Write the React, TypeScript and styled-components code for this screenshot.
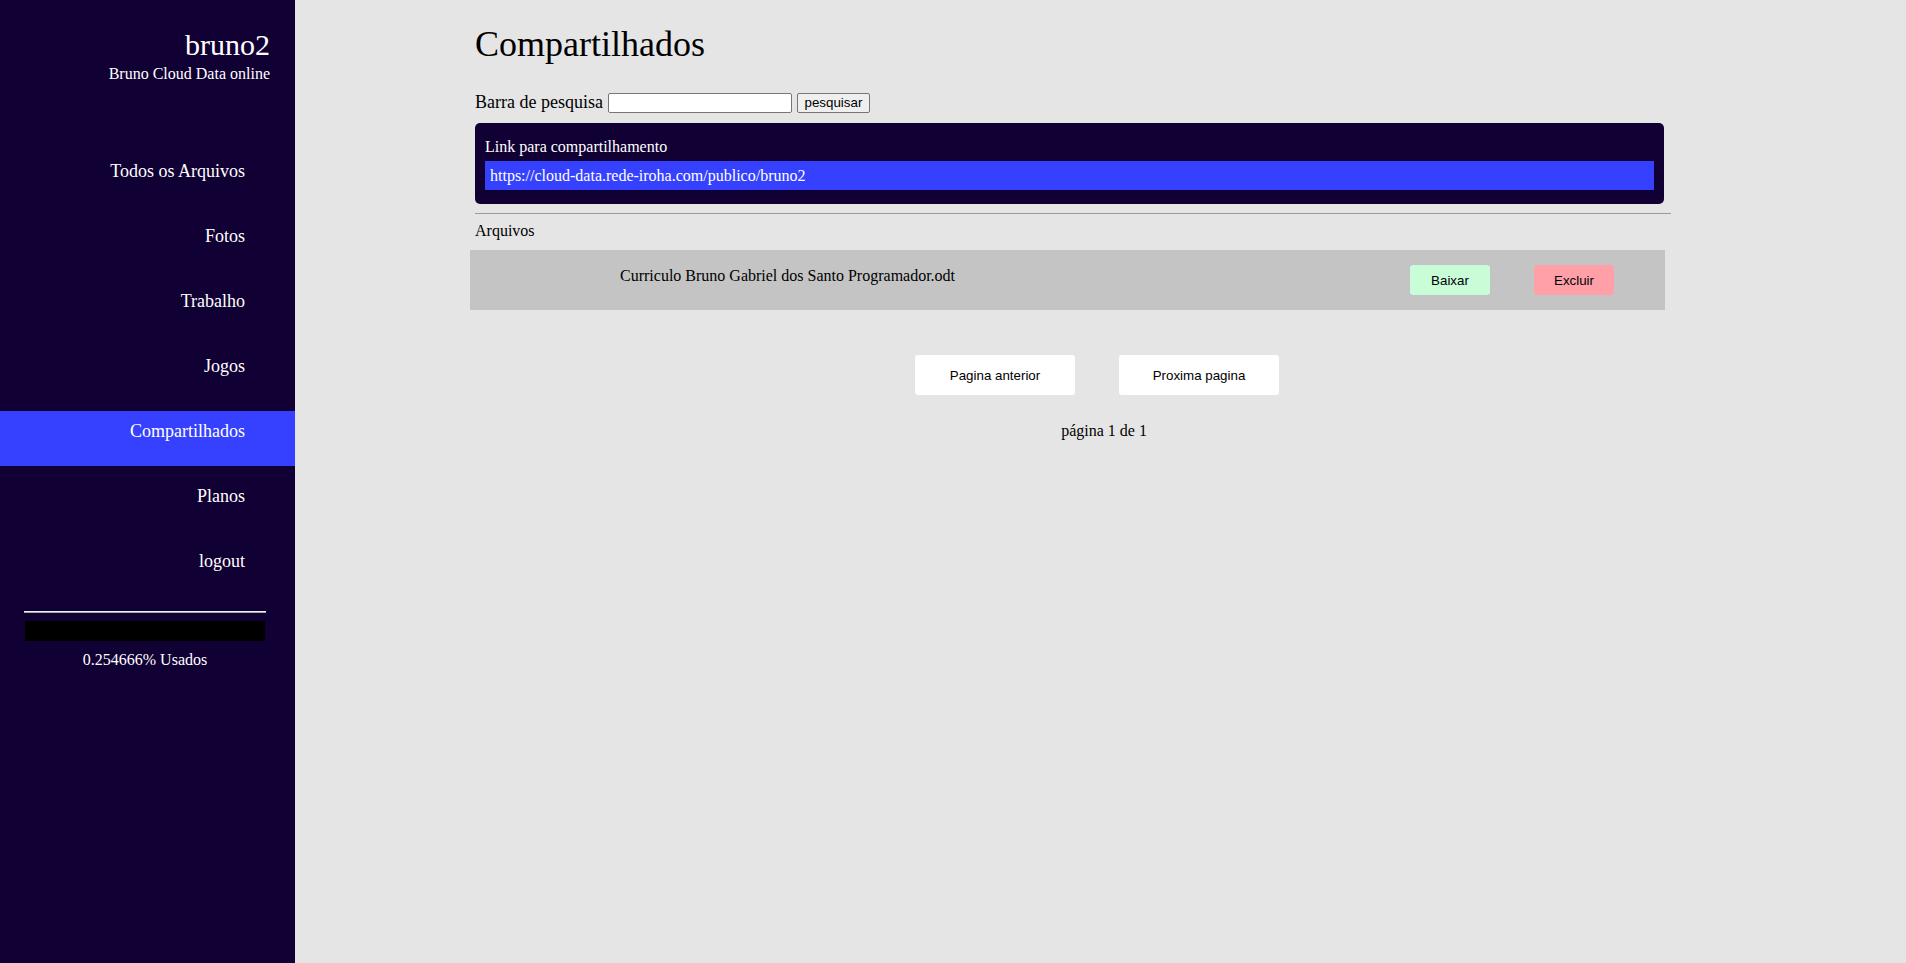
import React from "react";
import styled, { createGlobalStyle } from "styled-components";

const GlobalStyle = createGlobalStyle`
  html, body {
    margin: 0;
    padding: 0;
    background: #e5e5e5;
    font-family: "Liberation Serif", "Times New Roman", serif;
    color: #000;
  }
  * { box-sizing: border-box; }
`;

const Layout = styled.div`
  display: flex;
  min-height: 100vh;
`;

const Sidebar = styled.aside`
  width: 295px;
  flex-shrink: 0;
  background: #110033;
  color: #fff;
  display: flex;
  flex-direction: column;
`;

const Brand = styled.div`
  text-align: right;
  padding: 28px 25px 0 0;
`;

const BrandTitle = styled.div`
  font-size: 30px;
  line-height: 34px;
`;

const BrandSub = styled.div`
  font-size: 16px;
  line-height: 18px;
  margin-top: 3px;
`;

const Nav = styled.nav`
  display: flex;
  flex-direction: column;
  gap: 10px;
  margin-top: 68px;
`;

const NavItem = styled.a<{ $active?: boolean }>`
  display: block;
  height: 55px;
  padding: 10px 50px 0 0;
  text-align: right;
  font-size: 18px;
  line-height: 20px;
  color: #fff;
  text-decoration: none;
  background: ${(p) => (p.$active ? "#3541ff" : "transparent")};
  cursor: pointer;
`;

const Usage = styled.div`
  width: 242px;
  margin: 15px 0 0 24px;
`;

const Rule = styled.div`
  height: 2px;
  border-top: 1px solid #f2f2f2;
  border-bottom: 1px solid #a8a8a8;
`;

const UsageBar = styled.div`
  height: 20px;
  margin: 8px 1px 0;
  background: #000;
`;

const UsageText = styled.div`
  margin-top: 10px;
  font-size: 16px;
  line-height: 18px;
  text-align: center;
`;

const Main = styled.main`
  flex: 1;
  padding-top: 24px;
`;

const Content = styled.div`
  width: 1196px;
  margin-left: 175px;
`;

const Title = styled.h1`
  margin: 0 0 0 5px;
  font-size: 36px;
  line-height: 41px;
  font-weight: normal;
`;

const SearchRow = styled.form`
  display: flex;
  align-items: center;
  gap: 5px;
  height: 21px;
  margin: 27px 0 0 5px;
  font-size: 18px;
`;

const SearchInput = styled.input`
  width: 184px;
  height: 20px;
  padding: 1px 2px;
  border: 1px solid #767676;
  border-radius: 2px;
  background: #fff;
  font-size: 13.33px;
`;

const SearchButton = styled.button`
  width: 73px;
  height: 20px;
  padding: 0;
  border: 1px solid #767676;
  border-radius: 2px;
  background: #efefef;
  font-family: "Liberation Sans", Arial, sans-serif;
  font-size: 13.33px;
  color: #000;
`;

const LinkBox = styled.div`
  width: 1189px;
  margin: 10px 0 0 5px;
  padding: 15px 10px 14px;
  background: #110033;
  border-radius: 5px;
  color: #fff;
  display: flex;
  flex-direction: column;
  gap: 5px;
`;

const LinkLabel = styled.div`
  font-size: 16px;
  line-height: 18px;
`;

const LinkUrl = styled.div`
  height: 29px;
  line-height: 29px;
  padding: 0 5px;
  background: #3541ff;
  font-size: 16px;
`;

const Separator = styled.hr`
  width: 1196px;
  margin: 9px 0 0 5px;
  border: none;
  border-top: 1px solid #9a9a9a;
`;

const SectionLabel = styled.div`
  margin: 8px 0 0 5px;
  font-size: 16px;
  line-height: 18px;
`;

const FileRow = styled.div`
  display: flex;
  align-items: center;
  gap: 44px;
  width: 1195px;
  height: 60px;
  margin-top: 10px;
  padding: 0 51px 0 150px;
  background: #c4c4c4;
`;

const FileName = styled.div`
  flex: 1;
  align-self: flex-start;
  padding-top: 17px;
  font-size: 16px;
  line-height: 18px;
`;

const ActionButton = styled.button<{ $tone: "ok" | "danger" }>`
  width: 80px;
  height: 30px;
  border: none;
  border-radius: 3px;
  background: ${(p) => (p.$tone === "ok" ? "#c8fdd8" : "#ffa0a8")};
  font-family: "Liberation Sans", Arial, sans-serif;
  font-size: 13.33px;
  color: #000;
  cursor: pointer;
`;

const Pagination = styled.div`
  display: flex;
  justify-content: center;
  gap: 44px;
  margin-top: 45px;
  padding-right: 7px;
`;

const PageButton = styled.button`
  width: 160px;
  height: 40px;
  border: none;
  border-radius: 3px;
  background: #fff;
  font-family: "Liberation Sans", Arial, sans-serif;
  font-size: 13.33px;
  color: #000;
  cursor: pointer;
`;

const PageInfo = styled.div`
  margin-top: 27px;
  padding-left: 7px;
  text-align: center;
  font-size: 16px;
  line-height: 18px;
`;

const navItems = [
  "Todos os Arquivos",
  "Fotos",
  "Trabalho",
  "Jogos",
  "Compartilhados",
  "Planos",
  "logout",
];

export default function App() {
  return (
    <>
      <GlobalStyle />
      <Layout>
        <Sidebar>
          <Brand>
            <BrandTitle>bruno2</BrandTitle>
            <BrandSub>Bruno Cloud Data online</BrandSub>
          </Brand>
          <Nav>
            {navItems.map((item) => (
              <NavItem key={item} $active={item === "Compartilhados"}>
                {item}
              </NavItem>
            ))}
          </Nav>
          <Usage>
            <Rule />
            <UsageBar />
            <UsageText>0.254666% Usados</UsageText>
          </Usage>
        </Sidebar>
        <Main>
          <Content>
            <Title>Compartilhados</Title>
            <SearchRow onSubmit={(e) => e.preventDefault()}>
              <span>Barra de pesquisa</span>
              <SearchInput type="text" />
              <SearchButton type="submit">pesquisar</SearchButton>
            </SearchRow>
            <LinkBox>
              <LinkLabel>Link para compartilhamento</LinkLabel>
              <LinkUrl>https://cloud-data.rede-iroha.com/publico/bruno2</LinkUrl>
            </LinkBox>
            <Separator />
            <SectionLabel>Arquivos</SectionLabel>
            <FileRow>
              <FileName>Curriculo Bruno Gabriel dos Santo Programador.odt</FileName>
              <ActionButton $tone="ok">Baixar</ActionButton>
              <ActionButton $tone="danger">Excluir</ActionButton>
            </FileRow>
          </Content>
          <Pagination>
            <PageButton>Pagina anterior</PageButton>
            <PageButton>Proxima pagina</PageButton>
          </Pagination>
          <PageInfo>página 1 de 1</PageInfo>
        </Main>
      </Layout>
    </>
  );
}
